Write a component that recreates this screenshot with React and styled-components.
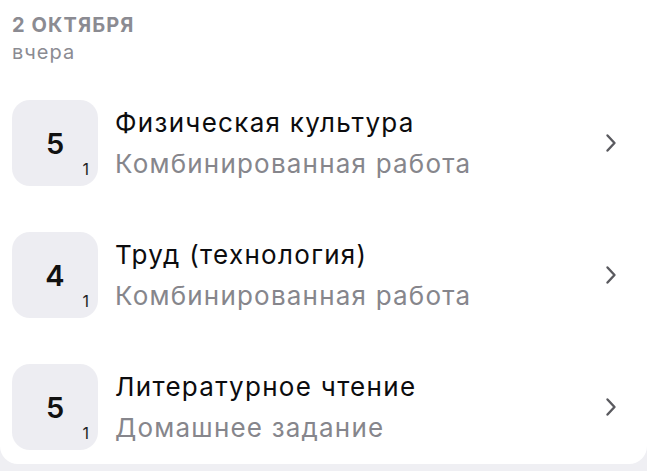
import React from "react";
import styled, { createGlobalStyle } from "styled-components";

const Global = createGlobalStyle`
  html, body { margin: 0; padding: 0; background: #efeff3; }
  body { font-family: Inter, "Noto Sans", sans-serif; -webkit-font-smoothing: antialiased; }
`;

const Card = styled.div`
  background: #ffffff;
  height: 464px;
  box-sizing: border-box;
  border-radius: 0 0 18px 18px;
  padding: 13px 30px 0 12px;
`;

const DateTitle = styled.div`
  font-size: 20px;
  line-height: 24px;
  font-weight: 700;
  color: #8b8b92;
  letter-spacing: 1.1px;
`;

const DateSub = styled.div`
  font-size: 20px;
  line-height: 24px;
  color: #8b8b92;
  letter-spacing: 1px;
  margin-top: 3px;
`;

const List = styled.div`
  display: flex;
  flex-direction: column;
  gap: 46px;
  margin-top: 36px;
`;

const Row = styled.div`
  display: grid;
  grid-template-columns: 86px 1fr auto;
  column-gap: 17px;
  align-items: center;
`;

const Badge = styled.div`
  position: relative;
  width: 86px;
  height: 86px;
  border-radius: 18px;
  background: #ededf2;
  display: flex;
  align-items: center;
  justify-content: center;
`;

const Grade = styled.span`
  font-size: 29px;
  font-weight: 600;
  color: #111;
  line-height: 1;
`;

const Count = styled.span`
  position: absolute;
  right: 9px;
  bottom: 9px;
  font-size: 16px;
  color: #222;
  line-height: 1;
`;

const Texts = styled.div`
  display: flex;
  flex-direction: column;
  gap: 11px;
`;

const Title = styled.div`
  font-size: 26px;
  line-height: 30px;
  letter-spacing: 1.3px;
  color: #0c0c0e;
`;

const Subtitle = styled.div`
  font-size: 26px;
  line-height: 30px;
  letter-spacing: 1.2px;
  color: #86868c;
`;

const Chevron = () => (
  <svg width="12" height="20" viewBox="0 0 12 20" fill="none">
    <path d="M2.5 2.5 L9.5 10 L2.5 17.5" stroke="#5a5a5f" strokeWidth="2.4" strokeLinecap="round" strokeLinejoin="round" />
  </svg>
);

const items = [
  { grade: "5", count: "1", title: "Физическая культура", sub: "Комбинированная работа" },
  { grade: "4", count: "1", title: "Труд (технология)", sub: "Комбинированная работа" },
  { grade: "5", count: "1", title: "Литературное чтение", sub: "Домашнее задание" },
];

export default function App() {
  return (
    <>
      <Global />
      <Card>
        <DateTitle>2 ОКТЯБРЯ</DateTitle>
        <DateSub>вчера</DateSub>
        <List>
          {items.map((it, i) => (
            <Row key={i}>
              <Badge>
                <Grade>{it.grade}</Grade>
                <Count>{it.count}</Count>
              </Badge>
              <Texts>
                <Title>{it.title}</Title>
                <Subtitle>{it.sub}</Subtitle>
              </Texts>
              <Chevron />
            </Row>
          ))}
        </List>
      </Card>
    </>
  );
}
